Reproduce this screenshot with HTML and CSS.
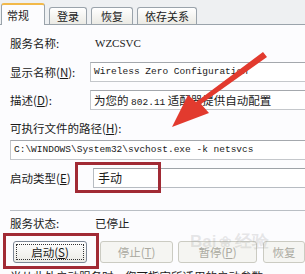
FILE: index.html
```html
<!DOCTYPE html>
<html>
<head>
    <meta charset="UTF-8">
    <title>WZCSVC 属性</title>
    <link rel="stylesheet" href="styles.css">
</head>
<body>
    <div class="tabs">
        <span class="tab active">常规</span>
        <span class="tab">登录</span>
        <span class="tab wide-tab">恢复</span>
        <span class="tab">依存关系</span>
    </div>

    <div class="panel">
        <div class="row first">
            <span class="label">服务名称:</span>
            <span class="value serif">WZCSVC</span>
        </div>
        <div class="row">
            <span class="label">显示名称(<u>N</u>):</span>
            <span class="box mono">Wireless Zero Configuration</span>
        </div>
        <div class="row">
            <span class="label">描述(<u>D</u>):</span>
            <span class="box">为您的 <span class="mono">802.11</span> 适配器提供自动配置</span>
        </div>
        <div class="row plain">可执行文件的路径(<u>H</u>):</div>
        <div class="box wide mono">C:\WINDOWS\System32\svchost.exe -k netsvcs</div>
        <div class="row">
            <span class="label">启动类型(<u>E</u>)</span>
            <span class="box select">手动</span>
        </div>
        <hr class="sep">
        <div class="row status">
            <span class="label">服务状态:</span>
            <span class="value">已停止</span>
        </div>
        <div class="buttons">
            <button class="btn focus">启动(<u>S</u>)</button>
            <button class="btn" disabled>停止(<u>T</u>)</button>
            <button class="btn" disabled>暂停(<u>P</u>)</button>
            <button class="btn" disabled>恢复</button>
        </div>
        <div class="hint">当从此处启动服务时，您可指定所适用的启动参数。</div>
    </div>

    <div class="mark mark-type"></div>
    <div class="mark mark-start"></div>
    <div class="watermark">Bai<span class="paw">❀</span>经验</div>

    <svg class="arrow" width="305" height="274" viewBox="0 0 305 274">
        <path d="M267 57 L201 104 L209 113 L172 127 L188 95 L196 102 L263 52 Z" fill="#e23a2e"/>
    </svg>
</body>
</html>
```

FILE: styles.css
```css
html, body {
    margin: 0;
    padding: 0;
}

body {
    width: 305px;
    height: 274px;
    overflow: hidden;
    position: relative;
    background: #fcfcfe;
    font-family: "Noto Sans CJK SC", "Liberation Sans", sans-serif;
    font-size: 11.5px;
    color: #1a1a1a;
}

u {
    text-decoration: underline;
}

.tabs {
    display: flex;
    align-items: flex-end;
    gap: 4px;
    height: 24px;
    padding-left: 1px;
    background: #eef0f2;
    font-size: 11px;
}

.tab {
    height: 16px;
    line-height: 16px;
    padding: 0 7px;
    border: 1px solid #9aa3ab;
    border-bottom: none;
    border-radius: 3px 3px 0 0;
    background: linear-gradient(#ffffff, #ebeae4);
}

.tab.wide-tab {
    padding: 0 9px;
}

.tab.active {
    height: 20px;
    line-height: 20px;
    padding: 0 15px 0 5px;
    background: #fcfcfe;
    border-top: 2px solid #f2b94a;
    position: relative;
    top: 1px;
}

.panel {
    border-top: 1px solid #9aa3ab;
    padding: 0 0 0 10px;
}

.row {
    display: flex;
    align-items: center;
}

.row.first {
    height: 22px;
    margin-top: 7px;
}

.row + .row {
    margin-top: 8px;
}

.label {
    width: 80px;
    flex: none;
}

.value {
    padding-left: 5px;
}

.serif {
    font-family: "Liberation Serif", serif;
    font-size: 11px;
}

.mono {
    font-family: "Liberation Mono", monospace;
    font-size: 9.5px;
}

.box {
    flex: 1;
    height: 20px;
    line-height: 18px;
    box-sizing: border-box;
    padding: 0 3px;
    border: 1px solid #c4c7cb;
    border-top-color: #a4a8ad;
    border-right: none;
    background: #fff;
    white-space: nowrap;
    overflow: hidden;
}

.row.plain {
    height: 20px;
    margin-top: 8px;
}

.box.wide {
    margin-top: 2px;
}

.box.wide + .row {
    margin-top: 8px;
}

.box.select {
    margin-left: 3px;
    padding-left: 4px;
    font-size: 12px;
    border-color: #b7bcc2;
    border-top-color: #9ea3a8;
}

.sep {
    margin: 22px 0 0 0;
    border: none;
    border-top: 1px solid #b9bec4;
}

.row.status {
    margin-top: 1px;
    height: 22px;
}

.buttons {
    display: flex;
    margin-top: 7px;
    margin-left: 3px;
}

.btn {
    width: 74px;
    height: 22px;
    padding: 0;
    flex: none;
    font: inherit;
    color: #1a1a1a;
    border: 1px solid #7d8795;
    border-radius: 3px;
    background: linear-gradient(#fefefe, #ebebe6);
}

.btn.focus {
    outline: 1px dotted #333;
    outline-offset: -4px;
}

.btn[disabled] {
    color: #aaa9a0;
    border-color: #cbcbc2;
    background: #f5f5f2;
}

.buttons .btn:nth-child(2) {
    margin-left: 13px;
    width: 73px;
}

.buttons .btn:nth-child(3) {
    margin-left: 5px;
    width: 79px;
}

.buttons .btn:nth-child(4) {
    margin-left: 6px;
    width: 42px;
}

.hint {
    margin-top: 5px;
    white-space: nowrap;
}

.mark {
    position: absolute;
    border: 3px solid #a12a35;
    box-sizing: border-box;
}

.mark-type {
    left: 75px;
    top: 162px;
    width: 86px;
    height: 31px;
}

.mark-start {
    left: 3px;
    top: 233px;
    width: 96px;
    height: 36px;
}

.watermark {
    position: absolute;
    left: 190px;
    top: 230px;
    font-family: "Liberation Sans", sans-serif;
    font-size: 17px;
    font-weight: bold;
    color: rgba(150, 150, 150, 0.22);
}

.paw {
    font-size: 15px;
    margin: 0 3px;
}

.arrow {
    position: absolute;
    left: 0;
    top: 0;
}
```
